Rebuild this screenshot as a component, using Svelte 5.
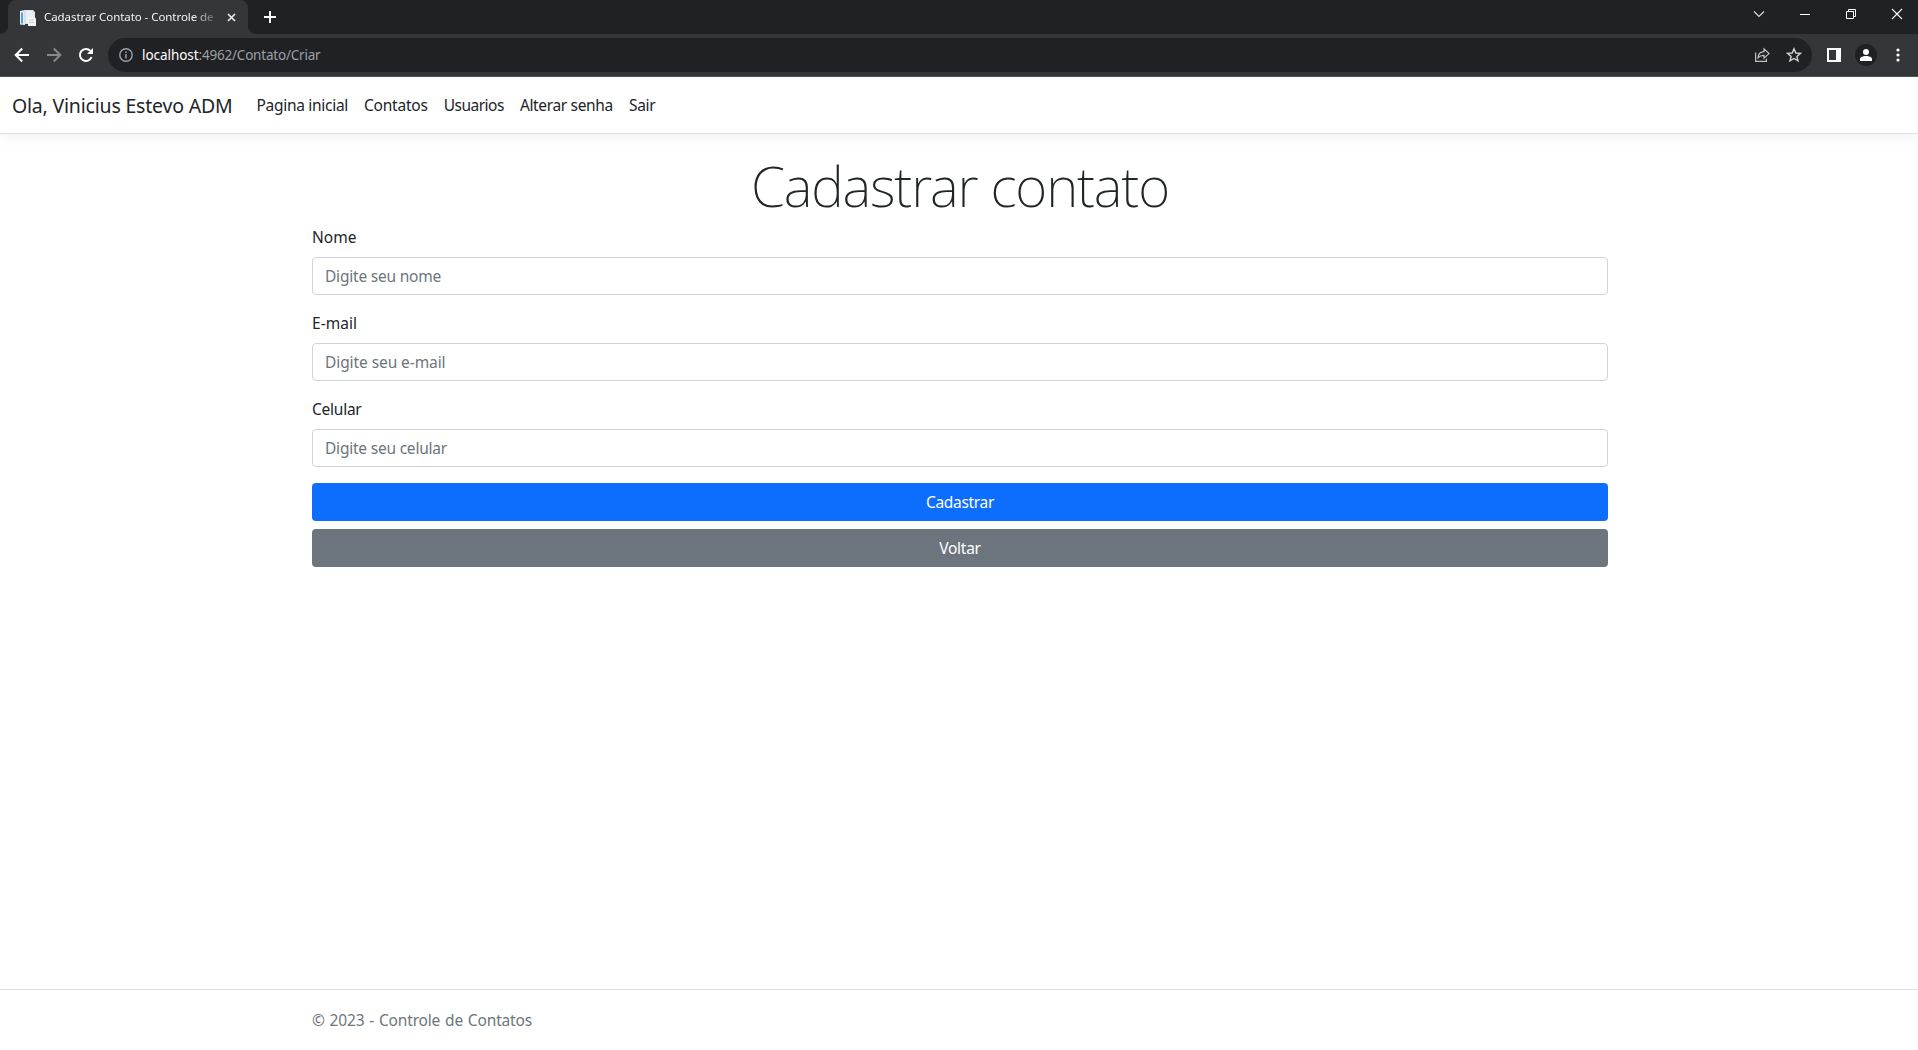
<script>
  // Tracks a run of text so that it occupies the given width.
  function fit(node, width) {
    const range = document.createRange();
    range.selectNodeContents(node);
    const natural = range.getBoundingClientRect().width;
    node.style.letterSpacing = (width - natural) / node.textContent.length + 'px';
  }

  const links = [
    ['Pagina inicial', 91.5],
    ['Contatos', 63.7],
    ['Usuarios', 60.2],
    ['Alterar senha', 93],
    ['Sair', 26.6]
  ];

  const fields = [
    { id: 'nome', label: 'Nome', lw: 44.5, hint: 'Digite seu nome', hw: 116 },
    { id: 'email', label: 'E-mail', lw: 45, hint: 'Digite seu e-mail', hw: 120.5 },
    { id: 'celular', label: 'Celular', lw: 49.5, hint: 'Digite seu celular', hw: 122 }
  ];

  let values = $state({ nome: '', email: '', celular: '' });
</script>

<div class="window">
  <div class="tabstrip">
    <div class="tab">
      <svg class="favicon" width="16" height="16" viewBox="0 0 16 16">
        <path d="M0 1l5-1v15l-5-.5z" fill="#e4eef5" />
        <path d="M1 2.500h2v11H1z" fill="#5ba3d5" />
        <path d="M4 0h9l2 2v12H4z" fill="#d9e2e9" />
        <path d="M6 1h6l2.500 2v10H6z" fill="#eceff1" />
        <path d="M8 7h6.500l1.500 1.500V16H8z" fill="#f1f3f4" />
        <path d="M9 10h5M9 12.500h5" stroke="#c9d0d5" />
      </svg>
      <span class="title"><span use:fit={169.5}>Cadastrar Contato - Controle de</span></span>
      <svg class="close" width="9" height="9" viewBox="0 0 9 9"><path d="M1 1l7 7M8 1L1 8" stroke="#e8eaed" stroke-width="1.700" /></svg>
    </div>
    <svg class="plus" width="12" height="12" viewBox="0 0 12 12"><path d="M6 0v12M0 6h12" stroke="#fff" stroke-width="2" /></svg>
    <div class="controls">
      <svg width="12" height="12" viewBox="0 0 12 12"><path d="M1 3.500l5 5 5-5" fill="none" stroke="#dadce0" stroke-width="1.100" /></svg>
      <svg width="12" height="12" viewBox="0 0 12 12"><path d="M1 6.500h10" stroke="#fff" /></svg>
      <svg width="12" height="12" viewBox="0 0 12 12"><path d="M1.500 3.500h7v7h-7zM3.500 3.500v-2h7v7h-2" fill="none" stroke="#fff" /></svg>
      <svg width="12" height="12" viewBox="0 0 12 12"><path d="M1 1l10 10M11 1L1 11" stroke="#fff" stroke-width="1.100" /></svg>
    </div>
  </div>

  <div class="toolbar">
    <svg class="nav-icon" width="16" height="16" viewBox="0 0 16 16"><path d="M15 8H2M8.200 1.500L1.700 8l6.500 6.500" fill="none" stroke="#fff" stroke-width="2" /></svg>
    <svg class="nav-icon" width="16" height="16" viewBox="0 0 16 16"><path d="M1 8h13M7.800 1.500L14.300 8l-6.500 6.500" fill="none" stroke="#86888a" stroke-width="2" /></svg>
    <svg class="nav-icon" width="16" height="16" viewBox="0 0 16 16"><path d="M13.600 10A6 6 0 1 1 12.400 3.900" fill="none" stroke="#fff" stroke-width="2" /><path d="M15 1v6H9z" fill="#fff" /></svg>
    <div class="omnibox">
      <svg class="info" width="14" height="14" viewBox="0 0 14 14"><circle cx="7" cy="7" r="6.200" fill="none" stroke="#9aa0a6" stroke-width="1.400" /><path d="M7 6v4.500M7 3.400v1.500" stroke="#9aa0a6" stroke-width="1.500" /></svg>
      <span class="host" use:fit={56.5}>localhost</span><span class="path" use:fit={122}>:4962/Contato/Criar</span>
      <svg class="share" width="16" height="16" viewBox="0 0 16 16" fill="none" stroke="#bdc1c6" stroke-width="1.200">
        <path d="M1.600 5.500v8.900h10.800v-2.600" />
        <path d="M4 10.800C4.300 6.500 6.500 4.700 10 4.600V1.900L15 6.600l-5 4.500V8.300C7.300 8.200 5.500 9 4 10.800z" />
      </svg>
      <svg class="star" width="16" height="16" viewBox="0 0 16 16"><path d="M8 1.800l1.800 4.200 4.600.4-3.500 3 1.100 4.500L8 11.500l-4 2.400 1.100-4.500-3.500-3 4.600-.4z" fill="none" stroke="#cfd2d6" stroke-width="1.400" /></svg>
    </div>
    <svg class="panel" width="14" height="14" viewBox="0 0 14 14"><path d="M0 0h14v14H0zM2 2v10h7V2z" fill="#fff" fill-rule="evenodd" /></svg>
    <svg class="avatar" width="22" height="22" viewBox="0 0 22 22"><circle cx="11" cy="11" r="11" fill="#202124" /><circle cx="11" cy="8" r="3" fill="#fff" /><path d="M5 17v-2c0-2 3-3 6-3s6 1 6 3v2z" fill="#fff" /></svg>
    <svg class="kebab" width="4" height="14" viewBox="0 0 4 14" fill="#fff"><circle cx="2" cy="2" r="1.600" /><circle cx="2" cy="7" r="1.600" /><circle cx="2" cy="12" r="1.600" /></svg>
  </div>

  <header>
    <a class="brand" href="#inicio"><span use:fit={220.5}>Ola, Vinicius Estevo ADM</span></a>
    <nav>
      {#each links as [text, width]}
        <a href="#{text}"><span use:fit={width}>{text}</span></a>
      {/each}
    </nav>
  </header>

  <main>
    <h1><span use:fit={418}>Cadastrar contato</span></h1>
    <form>
      {#each fields as f}
        <div class="group">
          <label for={f.id}><span use:fit={f.lw}>{f.label}</span></label>
          <div class="control">
            {#if !values[f.id]}<span class="hint"><span use:fit={f.hw}>{f.hint}</span></span>{/if}
            <input id={f.id} type="text" bind:value={values[f.id]} />
          </div>
        </div>
      {/each}
      <button type="button" class="primary"><span use:fit={68}>Cadastrar</span></button>
      <button type="button" class="secondary"><span use:fit={41.500}>Voltar</span></button>
    </form>
  </main>

  <footer><span use:fit={220}>© 2023 - Controle de Contatos</span></footer>
</div>

<style>
  :global(body) {
    margin: 0;
    background: #fff;
    overflow: hidden;
  }
  .window {
    height: 1050px;
    display: flex;
    flex-direction: column;
    font: 400 15.5px/24px 'Noto Sans', 'Open Sans', sans-serif;
    color: #212529;
    white-space: nowrap;
  }
  .window * {
    box-sizing: border-box;
  }
  svg {
    display: block;
    flex: none;
  }
  a {
    color: #212529;
    text-decoration: none;
  }

  .tabstrip {
    height: 34px;
    flex: none;
    display: flex;
    background: #202124;
  }
  .tab {
    position: relative;
    width: 240px;
    margin-left: 8px;
    padding: 0 12px;
    display: flex;
    align-items: center;
    background: #35363a;
    border-radius: 8px 8px 0 0;
  }
  /* Curved feet that join the tab to the toolbar. */
  .tab::before,
  .tab::after {
    content: '';
    position: absolute;
    bottom: 0;
    width: 8px;
    height: 8px;
  }
  .tab::before {
    left: -8px;
    background: radial-gradient(circle at 0 0, #202124 7.5px, #35363a 8.5px);
  }
  .tab::after {
    right: -8px;
    background: radial-gradient(circle at 100% 0, #202124 7.5px, #35363a 8.5px);
  }
  .favicon {
    margin-top: 1px;
  }
  .title {
    width: 171px;
    margin-left: 8px;
    font-size: 11.5px;
    color: #f1f3f4;
    mask-image: linear-gradient(90deg, #000 150px, transparent 176px);
  }
  .close {
    margin-left: 13.5px;
  }
  .plus {
    margin: 11px 0 0 16px;
  }
  .controls {
    display: flex;
    gap: 34px;
    margin: 8px 15px 0 auto;
  }

  .toolbar {
    height: 43px;
    flex: none;
    display: flex;
    align-items: center;
    background: #35363a;
    border-bottom: 1px solid #535156;
    padding: 0 18px 0 14px;
  }
  .nav-icon {
    margin-right: 16px;
  }
  .omnibox {
    flex: 1;
    height: 34px;
    margin: 0 15px 0 -2px;
    padding: 0 10px 0 11px;
    display: flex;
    align-items: center;
    border-radius: 17px;
    background: #202124;
    font-size: 13.5px;
  }
  .host {
    margin-left: 9px;
    color: #fff;
  }
  .path {
    color: #9aa0a6;
  }
  .share {
    margin-left: auto;
  }
  .star {
    margin-left: 16px;
  }
  .avatar {
    margin: 0 19px 0 14px;
  }

  header {
    height: 57px;
    flex: none;
    display: flex;
    align-items: center;
    padding: 0 12px;
    border-bottom: 1px solid #dee2e6;
    box-shadow: 0 4px 12px rgba(0, 0, 0, 0.05);
  }
  .brand {
    margin-right: 16px;
    padding-top: 1px;
    font-size: 19.5px;
    line-height: 30px;
  }
  nav {
    display: flex;
  }
  nav a {
    padding: 8px;
  }

  main {
    width: 1296px;
    margin: 16px 0 0 312px;
    flex: 1;
  }
  h1 {
    height: 67px;
    margin: 0 0 8px;
    font-size: 55px;
    line-height: 71px;
    font-weight: 200;
    text-align: center;
  }
  form {
    display: flex;
    flex-direction: column;
  }
  .group {
    margin-bottom: 16px;
  }
  label {
    display: block;
    margin-bottom: 8px;
  }
  .control {
    display: grid;
    height: 38px;
  }
  .control > * {
    grid-area: 1 / 1;
  }
  .hint {
    padding: 7px 13px;
    color: #6c757d;
    pointer-events: none;
    z-index: 1;
  }
  input {
    width: 100%;
    height: 38px;
    padding: 6px 12px;
    border: 1px solid #ced4da;
    border-radius: 4px;
    background: #fff;
    color: inherit;
    font: inherit;
    outline: none;
  }
  button {
    height: 38px;
    border: 0;
    border-radius: 4px;
    padding: 0;
    color: #fff;
    font: inherit;
  }
  .primary {
    background: #0d6efd;
    margin-bottom: 8px;
  }
  .secondary {
    background: #6c757d;
  }

  footer {
    height: 61px;
    flex: none;
    padding-left: 312px;
    border-top: 1px solid #dee2e6;
    line-height: 60px;
    color: #6c757d;
    word-spacing: 1px;
  }
</style>
